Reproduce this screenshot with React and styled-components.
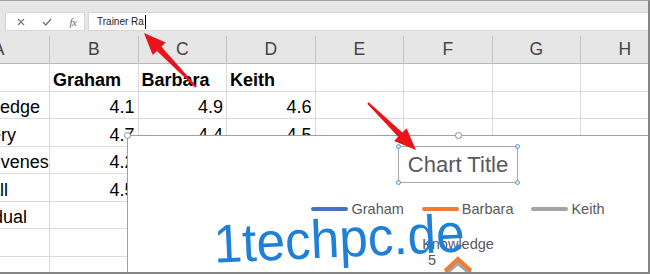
import React from "react";
import styled, { createGlobalStyle } from "styled-components";

const GlobalStyle = createGlobalStyle`
  body {
    margin: 0;
    background: #fff;
    font-family: "Liberation Sans", Arial, sans-serif;
  }
`;

const Frame = styled.div`
  position: relative;
  width: 650px;
  height: 274px;
  box-sizing: border-box;
  overflow: hidden;
  background: #fff;
  border-top: 1px solid #a3a3a3;
  border-right: 2px solid #858585;
  border-bottom: 2px solid #858585;
`;

const FormulaBar = styled.div`
  display: flex;
  gap: 3px;
  height: 35px;
  box-sizing: border-box;
  padding: 11px 0 5px 5px;
  background: #e6e6e6;
`;

const IconBox = styled.div`
  display: grid;
  grid-template-columns: repeat(3, 26px);
  align-items: center;
  justify-items: center;
  width: 80px;
  height: 19px;
  box-sizing: border-box;
  padding-left: 2px;
  background: #fff;
  border: 1px solid #d6d6d6;
  color: #7a7a7a;
`;

const FxGlyph = styled.span`
  font-family: "Liberation Serif", "Times New Roman", serif;
  font-style: italic;
  font-size: 11px;
  color: #6d6d6d;
  letter-spacing: -0.5px;
`;

const FormulaInput = styled.div`
  flex: 1;
  display: flex;
  align-items: center;
  height: 19px;
  box-sizing: border-box;
  padding-left: 8px;
  background: #fff;
  border: 1px solid #d6d6d6;
  border-right: none;
  font-size: 10px;
  color: #262626;
`;

const Caret = styled.span`
  width: 1px;
  height: 14px;
  margin-left: 1px;
  background: #000;
`;

const Sheet = styled.div`
  display: grid;
  grid-template-columns: 102px repeat(7, 88.5px);
  grid-template-rows: 28px;
  grid-auto-rows: 27.5px;
  margin-left: -52px;
`;

const HeaderCell = styled.div`
  display: flex;
  align-items: center;
  justify-content: center;
  box-sizing: border-box;
  background: #e6e6e6;
  border-right: 1px solid #c4c4c4;
  border-bottom: 1px solid #b8b8b8;
  font-size: 17.5px;
  color: #444;
`;

const Cell = styled.div`
  display: flex;
  align-items: flex-end;
  justify-content: ${(p) => (p.$numeric ? "flex-end" : "flex-start")};
  box-sizing: border-box;
  padding: 0 3px 2px;
  overflow: hidden;
  white-space: nowrap;
  border-right: 1px solid #dadada;
  border-bottom: 1px solid #dadada;
  font-size: 18px;
  line-height: 1;
  font-weight: ${(p) => (p.$bold ? 700 : 400)};
  color: #000;
`;

const Chart = styled.div`
  position: absolute;
  left: 127px;
  top: 134px;
  display: flex;
  flex-direction: column;
  align-items: center;
  width: 662px;
  height: 300px;
  box-sizing: border-box;
  padding-top: 10px;
  background: #fff;
  border: 1px solid #a0a0a0;
  z-index: 1;
`;

const Handle = styled.span`
  position: absolute;
  top: -4px;
  left: ${(p) => p.$left}px;
  width: 7px;
  height: 7px;
  box-sizing: border-box;
  border-radius: 50%;
  border: 1px solid #8a8a8a;
  background: #fff;
`;

const TitleBox = styled.div`
  position: relative;
  display: flex;
  align-items: center;
  justify-content: center;
  width: 120px;
  height: 37px;
  box-sizing: border-box;
  border: 1px solid #a9a9a9;
  font-size: 22px;
  color: #595959;
`;

const TitleHandle = styled.span`
  position: absolute;
  ${(p) => p.$v}: -3px;
  ${(p) => p.$h}: -3px;
  width: 5px;
  height: 5px;
  box-sizing: border-box;
  border-radius: 50%;
  border: 1px solid #5b9bd5;
  background: #dcebf8;
`;

const Legend = styled.div`
  display: flex;
  align-items: center;
  gap: 18px;
  height: 16px;
  margin-top: 18px;
`;

const LegendItem = styled.div`
  display: flex;
  align-items: center;
  gap: 3px;
  font-size: 14.5px;
  color: #595959;
`;

const Swatch = styled.span`
  width: 37px;
  height: 4px;
  border-radius: 2px;
  background: ${(p) => p.$color};
`;

const AxisLabel = styled.div`
  margin-top: 20px;
  font-size: 14.5px;
  line-height: 14px;
  color: #595959;
`;

const AxisRow = styled.div`
  display: grid;
  grid-template-columns: 1fr 40px 1fr;
  width: 100%;
  margin-top: 2px;
`;

const Tick = styled.span`
  justify-self: end;
  padding-right: 2px;
  font-size: 14.5px;
  line-height: 14px;
  color: #595959;
`;

const Watermark = styled.div`
  position: absolute;
  left: 207px;
  top: 210px;
  font-size: 54px;
  line-height: 1;
  white-space: nowrap;
  color: #1f80d8;
  transform: rotate(-2.6deg) scaleX(0.95);
  z-index: 2;
`;

const Arrows = styled.svg`
  position: absolute;
  left: 0;
  top: -1px;
  pointer-events: none;
  z-index: 3;
`;

const columns = ["A", "B", "C", "D", "E", "F", "G", "H"];

const rows = [
  ["", "Graham", "Barbara", "Keith"],
  ["Knowledge", "4.1", "4.9", "4.6"],
  ["Delivery", "4.7", "4.4", "4.5"],
  ["Effectiveness", "4.2", "4.8", "4.3"],
  ["Overall", "4.5", "4.7", "4.4"],
  ["Individual"],
  [],
  [],
];

const series = [
  { name: "Graham", color: "#4472c4" },
  { name: "Barbara", color: "#ed7d31" },
  { name: "Keith", color: "#a5a5a5" },
];

const App = () => {
  return (
    <Frame>
      <GlobalStyle />
      <FormulaBar>
        <IconBox>
          <svg width="8" height="8" viewBox="0 0 8 8">
            <path d="M1 1 L7 7 M7 1 L1 7" stroke="#777" strokeWidth="1.2" />
          </svg>
          <svg width="10" height="8" viewBox="0 0 10 8">
            <path d="M1 4.2 L3.8 7 L9 1" stroke="#777" strokeWidth="1.4" fill="none" />
          </svg>
          <FxGlyph>fx</FxGlyph>
        </IconBox>
        <FormulaInput>
          Trainer Ra
          <Caret />
        </FormulaInput>
      </FormulaBar>

      <Sheet>
        {columns.map((c) => (
          <HeaderCell key={c}>{c}</HeaderCell>
        ))}
        {rows.map((row, r) =>
          columns.map((c, i) => (
            <Cell key={`${r}-${c}`} $bold={r === 0} $numeric={r > 0 && i > 0}>
              {row[i] || ""}
            </Cell>
          ))
        )}
      </Sheet>

      <Chart>
        <Handle $left={-4.5} />
        <Handle $left={326.5} />
        <TitleBox>
          Chart Title
          <TitleHandle $v="top" $h="left" />
          <TitleHandle $v="top" $h="right" />
          <TitleHandle $v="bottom" $h="left" />
          <TitleHandle $v="bottom" $h="right" />
        </TitleBox>
        <Legend>
          {series.map((s) => (
            <LegendItem key={s.name}>
              <Swatch $color={s.color} />
              {s.name}
            </LegendItem>
          ))}
        </Legend>
        <AxisLabel>Knowledge</AxisLabel>
        <AxisRow>
          <Tick>5</Tick>
          <svg width="40" height="24" viewBox="0 0 40 24">
            <polyline points="6,22 20,10 34,22" fill="none" stroke="#a5a5a5" strokeWidth="4" />
            <polyline points="7,18 20,6 33,18" fill="none" stroke="#ed7d31" strokeWidth="4" />
          </svg>
        </AxisRow>
      </Chart>

      <Watermark>1techpc.de</Watermark>

      <Arrows width="650" height="274" viewBox="0 0 650 274">
        <polygon
          fill="#e8141a"
          points="144,33 165.7,42.6 161.4,46.7 196.7,86.3 195.3,87.7 157,50.9 152.7,55"
        />
        <polygon
          fill="#e8141a"
          points="416,150 394,141 398.2,136.7 367.3,103.7 368.7,102.3 402.4,132.5 406.6,128.2"
        />
      </Arrows>
    </Frame>
  );
};

export default App;
